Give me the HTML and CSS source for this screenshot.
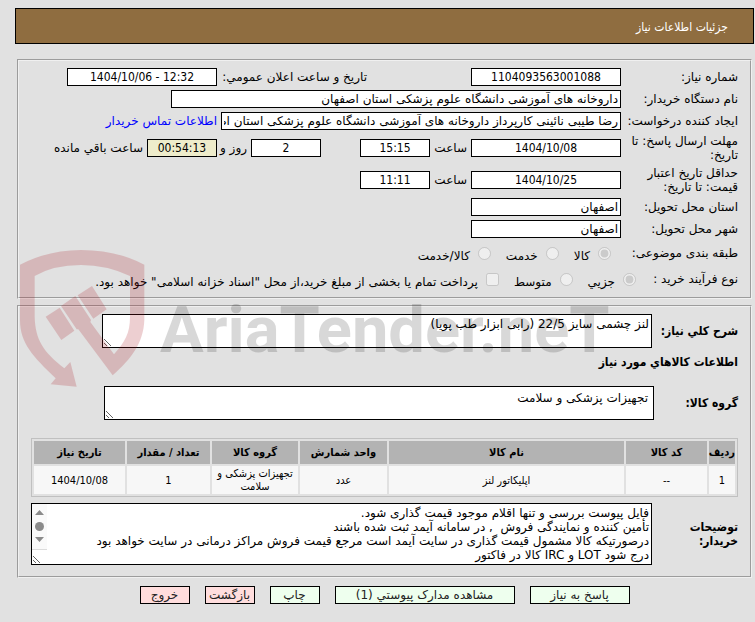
FILE: index.html
```html
<!DOCTYPE html>
<html lang="fa" dir="rtl">
<head>
<meta charset="utf-8">
<title>جزئیات اطلاعات نیاز</title>
<link rel="stylesheet" href="styles.css">
</head>
<body>
<header class="title-bar">جزئیات اطلاعات نیاز</header>

<form>
<fieldset class="panel">
  <div class="row">
    <label class="name" for="need-no">شماره نیاز:</label>
    <input class="date" id="need-no" type="text" value="1104093563001088" readonly>
    <label class="announce" for="announce">تاریخ و ساعت اعلان عمومي:</label>
    <input class="date" id="announce" type="text" value="1404/10/06 - 12:32" dir="ltr" readonly>
  </div>
  <div class="row">
    <label class="name" for="buyer">نام دستگاه خریدار:</label>
    <input class="org" id="buyer" type="text" value="داروخانه های آموزشی دانشگاه علوم پزشکی استان اصفهان" readonly>
  </div>
  <div class="row">
    <label class="name" for="creator">ایجاد کننده درخواست:</label>
    <input class="creator" id="creator" type="text" value="رضا طیبی نائینی کارپرداز داروخانه های آموزشی دانشگاه علوم پزشکی استان اصفهان" readonly>
    <a href="#contact">اطلاعات تماس خریدار</a>
  </div>
  <div class="row tall">
    <label class="name" for="deadline">مهلت ارسال پاسخ: تا تاریخ:</label>
    <input class="date" id="deadline" type="text" value="1404/10/08" readonly>
    <label class="hour" for="deadline-time">ساعت</label>
    <input class="short" id="deadline-time" type="text" value="15:15" readonly>
    <input class="short days" id="days" type="text" value="2" readonly>
    <label class="day" for="days">روز و</label>
    <input class="short countdown" id="countdown" type="text" value="00:54:13" readonly>
    <label for="countdown">ساعت باقي مانده</label>
  </div>
  <div class="row tall">
    <label class="name" for="validity">حداقل تاریخ اعتبار قیمت: تا تاریخ:</label>
    <input class="date" id="validity" type="text" value="1404/10/25" readonly>
    <label class="hour" for="validity-time">ساعت</label>
    <input class="short" id="validity-time" type="text" value="11:11" readonly>
  </div>
  <div class="row">
    <label class="name" for="province">استان محل تحویل:</label>
    <input class="place" id="province" type="text" value="اصفهان" readonly>
  </div>
  <div class="row">
    <label class="name" for="city">شهر محل تحویل:</label>
    <input class="place" id="city" type="text" value="اصفهان" readonly>
  </div>
  <div class="row choices">
    <span class="name">طبقه بندی موضوعی:</span>
    <div class="options subject">
      <label><input type="radio" name="subject" checked disabled><span>کالا</span></label>
      <label><input type="radio" name="subject" disabled><span>خدمت</span></label>
      <label><input type="radio" name="subject" disabled><span>کالا/خدمت</span></label>
    </div>
  </div>
  <div class="row choices">
    <span class="name process">نوع فرآیند خرید :</span>
    <div class="options">
      <label><input type="radio" name="process" checked disabled><span>جزیي</span></label>
      <label><input type="radio" name="process" disabled><span>متوسط</span></label>
      <label><input type="checkbox" disabled><span>پرداخت تمام یا بخشی از مبلغ خرید،از محل "اسناد خزانه اسلامی" خواهد بود.</span></label>
    </div>
  </div>
</fieldset>

<fieldset class="panel needs">
  <div class="block">
    <label class="head" for="summary">شرح کلي نیاز:</label>
    <textarea id="summary" class="summary">لنز چشمی سایز 22/5 (رابی ابزار طب پویا)</textarea>
  </div>
  <h2>اطلاعات کالاهاي مورد نیاز</h2>
  <div class="block">
    <label class="head group" for="group">گروه کالا:</label>
    <textarea id="group" class="summary inset">تجهیزات پزشکی و سلامت</textarea>
  </div>
  <table>
    <colgroup><col class="c-row"><col class="c-code"><col><col class="c-unit"><col class="c-group"><col class="c-count"><col class="c-date"></colgroup>
    <thead>
      <tr><th>ردیف</th><th>کد کالا</th><th>نام کالا</th><th>واحد شمارش</th><th>گروه کالا</th><th>تعداد / مقدار</th><th>تاریخ نیاز</th></tr>
    </thead>
    <tbody>
      <tr><td>1</td><td>--</td><td>اپلیکاتور لنز</td><td>عدد</td><td>تجهیزات پزشکی و سلامت</td><td>1</td><td>1404/10/08</td></tr>
    </tbody>
  </table>
  <div class="block">
    <label class="head" for="notes">توضیحات خریدار:</label>
    <div class="notes-box">
      <textarea id="notes" class="notes">فایل پیوست بررسی و تنها اقلام موجود قیمت گذاری شود.
تأمین کننده و نمایندگی فروش  , در سامانه آیمد ثبت شده باشند
درصورتیکه کالا مشمول قیمت گذاری در سایت آیمد است مرجع قیمت فروش مراکز درمانی در سایت خواهد بود
درج شود LOT و IRC کالا در فاکتور</textarea>
      <svg class="scroll" viewBox="0 0 15 46" aria-hidden="true">
        <path fill="#fafafa" d="M0 0H15V46H0Z"/>
        <path fill="#8b8b8b" d="M3 11L7.500 6L12 11ZM3 33L7.500 38L12 33Z"/>
        <circle fill="#8b8b8b" cx="7.500" cy="22.500" r="4.500"/>
        <path fill="#dcdcdc" d="M0 45H15V46H0Z"/>
      </svg>
    </div>
  </div>
</fieldset>

<div class="actions">
  <button type="button" class="reply">پاسخ به نیاز</button>
  <button type="button" class="docs">مشاهده مدارک پیوستي (1)</button>
  <button type="button">چاپ</button>
  <button type="button" class="leave">بازگشت</button>
  <button type="button" class="leave">خروج</button>
</div>
</form>

<div class="watermark" dir="ltr">
  <svg viewBox="0 0 480 480" aria-hidden="true">
    <path d="M30 74Q115 30 213 30Q320 30 403 74V240C400 310 365 355 308 406L205 268L200 268L153 198L196 168L243 240L241 246L312 343C345 305 360 280 360 230V108Q290 75 213 75Q130 75 74 108V230C76 300 100 335 163 385L181 366L200 440L122 433L137 415C70 350 30 310 30 240Z"/>
    <path d="M107 230L149 203L193 272L154 300ZM203 166L246 138L290 208L250 236Z"/>
  </svg>
  <span>AriaTender.neT</span>
</div>
</body>
</html>
```
FILE: styles.css
```css
* { box-sizing: border-box; }

body {
  position: relative;
  margin: 0;
  padding: 8px 1px 8px 15px;
  background: #e1e1e1;
  color: #000;
  font: 12px/14px "DejaVu Sans", sans-serif;
}

.title-bar,
.head,
h2,
table,
.row .date,
.row .short {
  font-family: "DejaVu Sans Condensed", "DejaVu Sans", sans-serif;
}

.title-bar {
  height: 36px;
  padding: 11px 25px;
  border: 1px solid #000;
  background: #8f6d40;
  color: #fff;
}

.panel {
  margin: 15px 2px 0;
  padding: 5px 12px;
  border: 2px groove #f0f0f0;
  min-width: 0;
}

.row {
  display: flex;
  align-items: center;
  gap: 4px;
  min-height: 22px;
  white-space: nowrap;
}
.tall { min-height: 32px; }

.name {
  flex: none;
  width: 113px;
  white-space: normal;
}

input[type="text"],
textarea {
  margin: 0;
  border: 1px solid #000;
  border-radius: 0;
  background: #fff;
  color: #000;
  font: inherit;
}
input[type="text"] {
  flex: none;
  height: 18px;
  padding: 0 2px;
}
.row .date { width: 150px; text-align: center; }
.row .short { width: 70px; text-align: center; }
.row .place { width: 150px; }
.row .org { width: 450px; }
.row .creator { width: 400px; }
.row .countdown { background: #eeeccb; }
.row .days { margin-right: 35px; }
.announce { width: 246px; padding-right: 100px; }
.hour { width: 33px; }
.day { width: 26px; }

a { color: #00f; text-decoration: none; }

.choices { min-height: 26px; }
.choices .process { width: 98px; }
.options { display: flex; gap: 15px; padding-top: 4px; }
.subject { padding-right: 10px; }
.options label { display: flex; gap: 8px; }
.options input { flex: none; width: 13px; height: 13px; margin: 0; }
.options span { padding-top: 2px; }

.needs { margin-top: 6px; padding-top: 7px; padding-bottom: 11px; }
.block { display: flex; align-items: center; }
.head { flex: none; width: 86px; font-weight: bold; }
.head.group { width: 84px; }
textarea {
  display: block;
  padding: 2px;
  resize: both;
}
.summary { width: 550px; height: 34px; }
.summary.inset { padding: 4px 5px; }
.notes-box { position: relative; flex: 1; }
.notes { width: 100%; height: 62px; }
.scroll {
  position: absolute;
  top: 1px;
  left: 1px;
  width: 15px;
  height: 46px;
}
h2 {
  margin: 7px 0 17px;
  font-size: 12px;
  line-height: 14px;
}

table {
  width: 100%;
  margin: 18px 0 6px;
  border: 1px solid #c0c0c0;
  border-spacing: 2px;
  table-layout: fixed;
  font-size: 11px;
  line-height: 13px;
  text-align: center;
}
th { height: 23px; padding: 0; background: #b3b3b3; }
td { height: 28px; padding: 1px; background: #f7f7f7; }
.c-row { width: 26px; }
.c-code { width: 81px; }
.c-unit { width: 87px; }
.c-group { width: 86px; }
.c-count { width: 83px; }
.c-date { width: 91px; }

.actions {
  display: flex;
  justify-content: center;
  gap: 15px;
  margin-top: 8px;
}
button {
  width: 50px;
  height: 18px;
  padding: 0;
  border: 1px solid #000;
  background: #eeffee;
  color: #222;
  font: inherit;
  white-space: nowrap;
}
.reply { width: 100px; }
.docs { width: 180px; }
.leave { background: #ffdddd; }

.watermark {
  position: absolute;
  top: 240px;
  left: 10px;
  display: flex;
  pointer-events: none;
}
.watermark svg {
  width: 160px;
  height: 160px;
  fill: #aa1620;
  opacity: 0.2;
}
.watermark span {
  margin: 44px 0 0 -10px;
  color: #000;
  font: bold 65px/92px "Roboto", sans-serif;
  opacity: 0.15;
}
```
